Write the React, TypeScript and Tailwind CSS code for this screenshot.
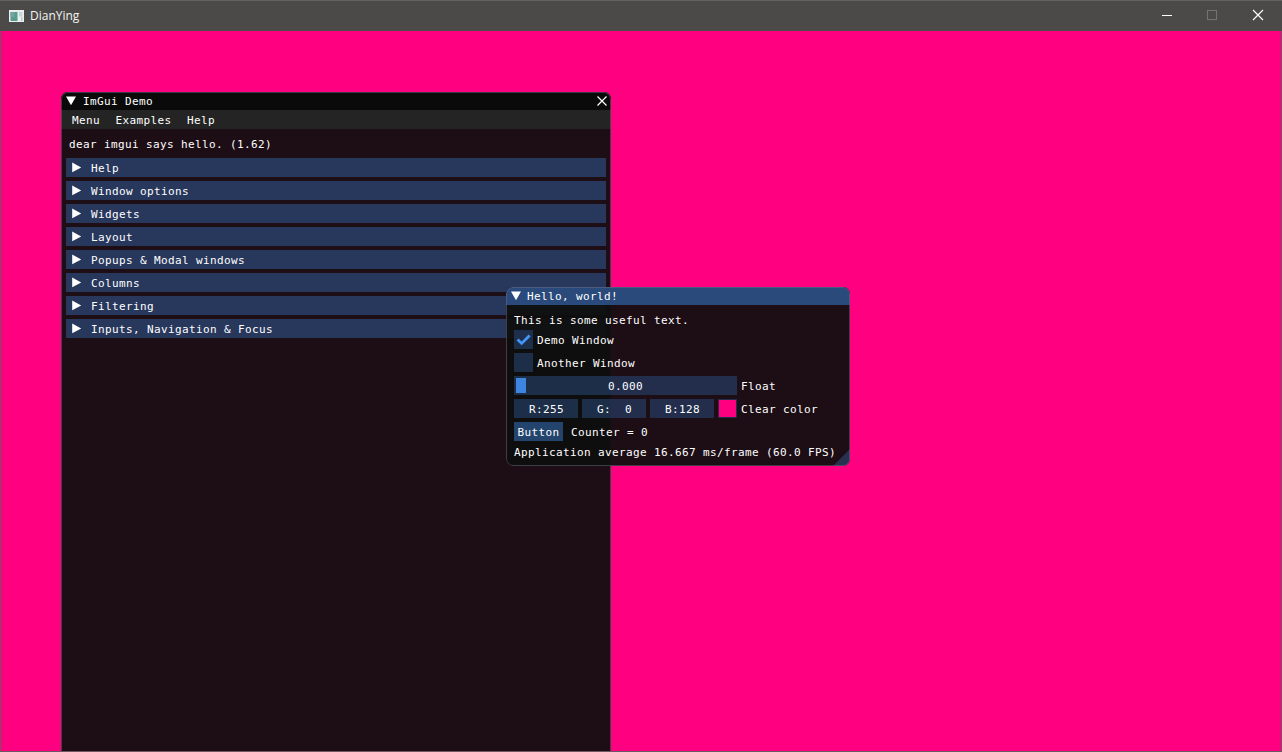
import type { ReactNode } from "react";

const sections = [
  "Help",
  "Window options",
  "Widgets",
  "Layout",
  "Popups & Modal windows",
  "Columns",
  "Filtering",
  "Inputs, Navigation & Focus",
];

const channels = ["R:255", "G:  0", "B:128"];

function ArrowDown() {
  return (
    <svg className="block h-[18px] w-[18px] shrink-0" viewBox="0 0 18 18" fill="#fff">
      <path d="M5 4.6H15L10 13.2Z" />
    </svg>
  );
}

function ArrowRight() {
  return (
    <svg className="block h-[19px] w-[25px] shrink-0" viewBox="0 0 25 19" fill="#fff">
      <path d="M6.2 4.6V14.2L15.2 9.4Z" />
    </svg>
  );
}

function TitleBar() {
  return (
    <header className="flex h-[31px] shrink-0 items-center border-t border-[#626261] bg-[#4b4a48]">
      <svg className="ml-[9px] block h-3 w-[15px]" viewBox="0 0 15 12">
        <rect width="15" height="12" fill="#e9efee" />
        <rect x="1.5" y="2" width="7" height="9" fill="#5b9a8c" />
        <rect x="1.5" y="2" width="4" height="5" fill="#72a5a2" />
        <rect x="10" y="2" width="3.5" height="4.5" fill="#c3d8d6" />
        <rect x="12" y="7" width="1.5" height="4" fill="#b9cbc9" />
      </svg>
      <span className="ml-[6px] grow font-['Open_Sans',sans-serif] text-[12px] leading-[28px] text-[#f4f4f4]">DianYing</span>
      <svg className="block h-[30px] w-[138px]" viewBox="0 0 138 30" fill="none" shapeRendering="crispEdges">
        <path d="M18 14.5H28" stroke="#fff" />
        <rect x="63.5" y="9.5" width="9" height="9" stroke="#747372" />
        <path d="M109 9L119 19M119 9L109 19" stroke="#fff" strokeWidth="1.2" shapeRendering="auto" />
      </svg>
    </header>
  );
}

function Label({ children }: { children: ReactNode }) {
  return <span className="pt-[2px]">{children}</span>;
}

function Row({ children }: { children: ReactNode }) {
  return <div className="flex h-[19px] items-center gap-1">{children}</div>;
}

function DemoWindow() {
  return (
    <section className="absolute left-[60px] top-[61px] h-[680px] w-[550px] overflow-hidden rounded-t-[7px] bg-[#0f0f0f]/94">
      <div className="flex h-[18px] items-center bg-[#0a0a0a]">
        <ArrowDown />
        <span className="ml-[4px] grow pt-[2px]">ImGui Demo</span>
        <svg className="mr-[3px] block h-3 w-3" viewBox="0 0 12 12" stroke="#fff" strokeWidth="1.2">
          <path d="M1.5 1.5L10.5 10.5M10.5 1.5L1.5 10.5" />
        </svg>
      </div>
      <nav className="flex h-[19px] items-center gap-[15.5px] bg-[#242424] pl-[11px]">
        <Label>Menu</Label>
        <Label>Examples</Label>
        <Label>Help</Label>
      </nav>
      <p className="mt-[9px] h-[13px] pl-2 leading-[13px]">dear imgui says hello. (1.62)</p>
      <div className="mt-[7px] flex flex-col gap-1 pl-[5px] pr-[5px]">
        {sections.map((name) => (
          <div key={name} className="flex h-[19px] items-center bg-[#4296fa]/31">
            <ArrowRight />
            <Label>{name}</Label>
          </div>
        ))}
      </div>
      <div className="pointer-events-none absolute inset-0 rounded-t-[7px] border border-b-0 border-[#6e6e80]/50" />
    </section>
  );
}

function HelloWindow() {
  return (
    <section className="absolute left-[505px] top-[256px] h-[179px] w-[344px] overflow-hidden rounded-[7px] bg-[#0f0f0f]/94">
      <div className="flex h-[18px] items-center bg-[#294a7a]">
        <ArrowDown />
        <span className="ml-[3px] pt-[2px]">Hello, world!</span>
      </div>
      <div className="flex flex-col gap-1 px-2 pt-[8px]">
        <p className="h-[13px] leading-[15px]">This is some useful text.</p>
        <Row>
          <span className="h-[19px] w-[19px] bg-[#294a7a]/54">
            <svg className="block h-[19px] w-[19px]" viewBox="0 0 19 19" fill="none" stroke="#4296fa" strokeWidth="2.8">
              <path d="M3.6 9.6L7.6 13.4L15.6 5.4" />
            </svg>
          </span>
          <Label>Demo Window</Label>
        </Row>
        <Row>
          <span className="h-[19px] w-[19px] bg-[#294a7a]/54" />
          <Label>Another Window</Label>
        </Row>
        <Row>
          <div className="flex h-[19px] w-[223px] items-center bg-[#294a7a]/54 pl-[2px]">
            <span className="h-[15px] w-[10px] bg-[#3d85e0]" />
            <span className="grow pr-[12px] pt-[2px] text-center">0.000</span>
          </div>
          <Label>Float</Label>
        </Row>
        <Row>
          {channels.map((value) => (
            <span key={value} className="h-[19px] w-16 whitespace-pre bg-[#294a7a]/54 pl-px text-center leading-[21px]">
              {value}
            </span>
          ))}
          <span className="h-[19px] w-[19px] border border-[#294a7a]/54 bg-[#ff0080] bg-clip-padding" />
          <Label>Clear color</Label>
        </Row>
        <Row>
          <button className="h-[19px] w-[49px] bg-[#4296fa]/40 text-center leading-[21px] tracking-[0.378px]">Button</button>
          <span className="ml-1 pt-[2px]">Counter = 0</span>
        </Row>
        <p className="h-[13px] leading-[15px]">Application average 16.667 ms/frame (60.0 FPS)</p>
      </div>
      <svg className="absolute bottom-0 right-0 block h-[17px] w-[17px]" viewBox="0 0 16 16" fill="#4296fa" fillOpacity="0.25">
        <path d="M16 0V16H0Z" />
      </svg>
      <div className="pointer-events-none absolute inset-0 rounded-[7px] border border-[#6e6e80]/50" />
    </section>
  );
}

export default function App() {
  return (
    <div className="flex h-[752px] w-[1282px] flex-col overflow-hidden bg-[#ff0080]">
      <TitleBar />
      <main className="relative grow overflow-hidden whitespace-nowrap border-x border-b border-[#6f5560] font-['DejaVu_Sans_Mono',monospace] text-[11px] leading-[18px] tracking-[0.378px] text-white">
        <DemoWindow />
        <HelloWindow />
      </main>
    </div>
  );
}
